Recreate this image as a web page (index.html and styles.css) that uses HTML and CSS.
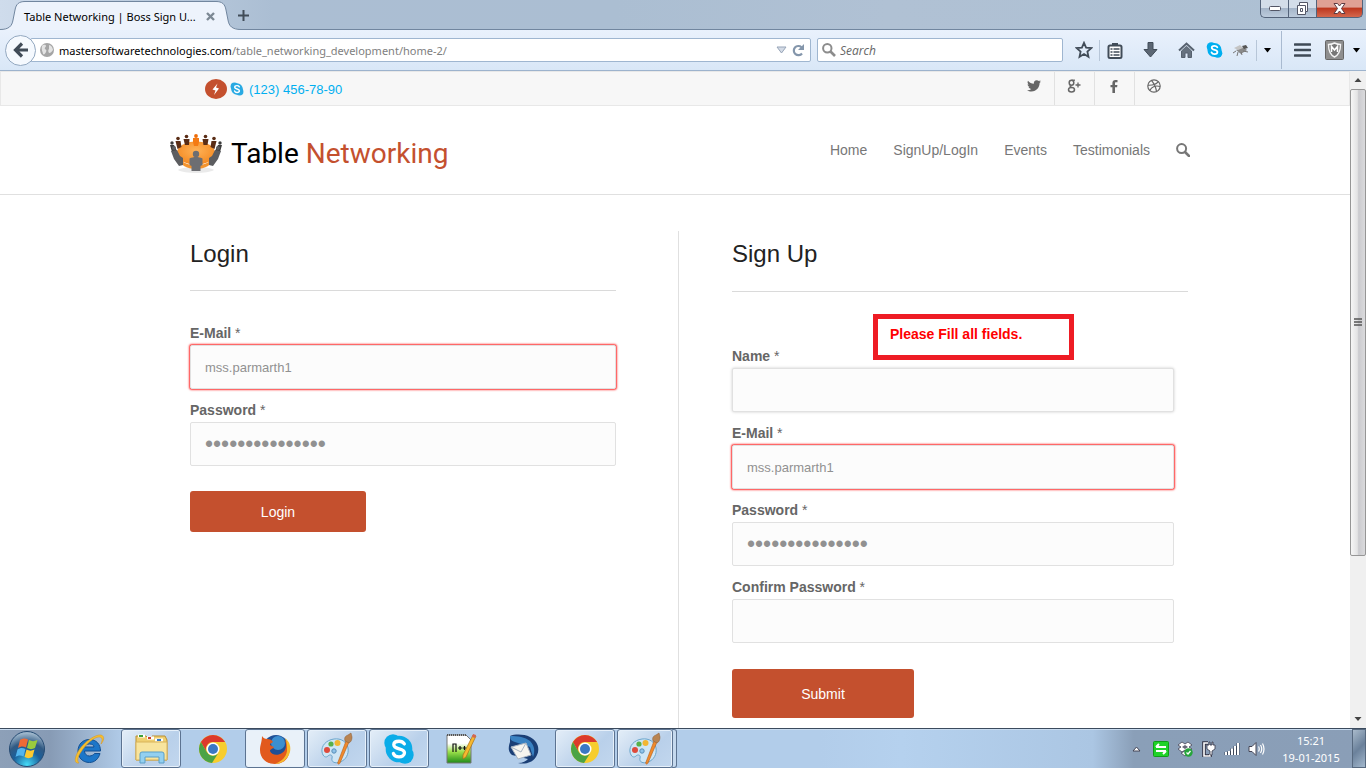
FILE: index.html
```html
<!DOCTYPE html>
<html lang="en">
<head>
<meta charset="utf-8">
<title>Table Networking | Boss Sign Up</title>
<link rel="stylesheet" href="styles.css">
</head>
<body>
<svg class="defs" aria-hidden="true">
  <defs>
    <symbol id="chrome" viewBox="0 0 30 30">
      <circle cx="15" cy="15" r="14" fill="#f7cd2e"/>
      <path d="M2.9 8A14 14 0 0 1 27.1 8H15A7 7 0 0 0 8.9 18.500Z" fill="#dc3a2c"/>
      <path d="M2.900 8A14 14 0 0 0 14 29L20 19.500A7 7 0 0 1 9 18.500Z" fill="#4ba345"/>
      <circle cx="15" cy="15" r="6.500" fill="#fff"/>
      <circle cx="15" cy="15" r="5" fill="#3b78c4"/>
    </symbol>
    <symbol id="paint" viewBox="0 0 34 34">
      <path d="M14 7C6 8 1 14 2 20c1 5 4 6 6 4s5-1 4 2c-1 4 3 6 8 4 6-2 9-8 8-14-1-6-7-10-14-9z" fill="#cfe6f5" stroke="#6ba6cc"/>
      <circle cx="7" cy="18" r="3" fill="#de4a3c"/><circle cx="11" cy="12" r="2.600" fill="#58b04a"/><circle cx="17.500" cy="11" r="3" fill="#f2b632"/><circle cx="14" cy="19" r="2.200" fill="#8ec3ea" stroke="#5a8fb8"/>
      <path d="M26 9l3 1-9 21c-1 2-3 1-2-1z" fill="#f08a2c" stroke="#b65e17" stroke-width=".6"/>
      <path d="M25 9c-1-3 0-5 3-6l3-2 1 4c0 3-1 5-3 6z" fill="#b98452" stroke="#8a5a30" stroke-width=".5"/>
    </symbol>
    <symbol id="skype" viewBox="0 0 24 24">
      <circle cx="7.500" cy="7.500" r="6.500"/><circle cx="16.500" cy="16.500" r="6.500"/><circle cx="12" cy="12" r="10"/>
      <path d="M16 8.200C15 6.700 13.500 6.200 12 6.200c-2.400 0-3.900 1.100-3.900 2.700 0 4 8 2 8 6 0 2-1.900 3-4.100 3-2 0-3.500-.8-4.200-2.500" fill="none" stroke="#fff" stroke-width="2.500" stroke-linecap="round"/>
    </symbol>
  </defs>
</svg>

<header class="chrome">
  <div class="tabstrip">
    <div class="tab">
      <svg class="tab-shape" viewBox="0 0 245 30" aria-hidden="true"><path d="M0 30V29.500C9 29.500 12 26 13 20L15 10C16 4 19 1.500 25 1.500H216C222 1.500 225 4 226 10L228 20C229 26 232 29.500 241 29.500H245V30Z" fill="#edf3fc"/><path d="M0 29.500C9 29.500 12 26 13 20L15 10C16 4 19 1.500 25 1.500H216C222 1.500 225 4 226 10L228 20C229 26 232 29.500 241 29.500H245" fill="none" stroke="#71869f"/></svg>
      <span class="tab-title">Table Networking | Boss Sign U...</span>
      <button class="plain tab-close" aria-label="Close tab"><svg width="9" height="9" viewBox="0 0 9 9"><path d="M1 1l7 7M8 1L1 8" stroke="#7c8894" stroke-width="2.400"/></svg></button>
    </div>
    <button class="plain new-tab" aria-label="New tab"><svg width="11" height="11" viewBox="0 0 11 11"><path d="M5.500 0v11M0 5.500h11" stroke="#414c58" stroke-width="2"/></svg></button>
    <div class="win-buttons">
      <button aria-label="Minimize"><svg width="12" height="6" viewBox="0 0 12 6"><rect x=".5" y=".5" width="11" height="4" rx="1" fill="#fff" stroke="#535666"/></svg></button>
      <button aria-label="Restore"><svg width="13" height="13" viewBox="0 0 13 13"><path d="M3.500 .5h8v9h-2v3h-8v-9h2z" fill="#fff" stroke="#535666"/><path d="M3.500 3.500h6v6M4.500 6.500h2v3h-2z" fill="none" stroke="#535666"/></svg></button>
      <button class="win-close" aria-label="Close"><svg width="13" height="11" viewBox="0 0 13 11"><path d="M1 .5h3.500l2 2.500 2-2.500H12L8.500 5.500 12 10.500H8.500L6.500 8l-2 2.500H1l3.500-5z" fill="#fff" stroke="#5d3a41"/></svg></button>
    </div>
  </div>

  <div class="toolbar">
    <button class="back" aria-label="Back"><svg width="16" height="16" viewBox="0 0 16 16"><path d="M9 1.500L2.500 8 9 14.500M3 8h12" fill="none" stroke="#414c58" stroke-width="3.200"/></svg></button>
    <div class="urlbar">
      <svg width="14" height="14" viewBox="0 0 14 14" aria-hidden="true"><circle cx="7" cy="7" r="7" fill="#a5a5a5"/><path d="M2 3c2-2 4-1 4 0s-2 2-1 3 2 1 1 3-2 3-3 2C3 9 1 7 2 3zM9 2c2 0 4 3 4 5-1 1-2 3-4 3-1-2-1-3 0-4z" fill="#e3e3e3"/></svg>
      <div class="url" role="textbox" aria-label="Address"><b>mastersoftwaretechnologies.com</b>/table_networking_development/home-2/</div>
      <svg width="11" height="8" viewBox="0 0 11 8" aria-hidden="true"><path d="M1 1h9L5.500 7z" fill="#d4dbe6" stroke="#97a5b8"/></svg>
      <button class="plain" aria-label="Reload"><svg width="13" height="13" viewBox="0 0 13 13"><path d="M10 9.500A4.600 4.600 0 1 1 9.500 3.200" fill="none" stroke="#8496ab" stroke-width="2.200"/><path d="M12 0v6H6z" fill="#8496ab"/></svg></button>
    </div>
    <div class="searchbar">
      <svg width="14" height="14" viewBox="0 0 14 14" aria-hidden="true"><circle cx="5.300" cy="5.300" r="4.200" fill="none" stroke="#8c8c8c" stroke-width="2"/><path d="M8.500 8.500l4.500 4.500" stroke="#8c8c8c" stroke-width="2.600"/></svg>
      <input type="text" placeholder="Search" aria-label="Search the web">
    </div>
    <div class="tools">
      <button class="plain w30" aria-label="Bookmark"><svg width="18" height="18" viewBox="0 0 18 18"><path d="M9 1.800l2.100 4.800 5.200.5-3.900 3.500 1.100 5.200L9 13.100l-4.500 2.700 1.100-5.200L1.700 7.100l5.200-.5z" fill="none" stroke="#414c58" stroke-width="1.800"/></svg></button>
      <i class="sep"></i>
      <button class="plain w30" aria-label="Bookmarks list"><svg width="16" height="17" viewBox="0 0 16 17"><path d="M5 3.500V1h6v2.500" fill="#414c58"/><rect x="1.500" y="3.500" width="13" height="12.500" rx="1.500" fill="#fff" stroke="#414c58" stroke-width="2"/><path d="M3.500 7h2m1 0h6M3.500 10h2m1 0h6M3.500 13h2m1 0h6" stroke="#414c58" stroke-width="1.500"/></svg></button>
      <button class="plain w40" aria-label="Downloads"><svg width="15" height="16" viewBox="0 0 15 16"><path d="M5 .5h5v7h4L7.500 15 1 7.500h4z" fill="#5b6673" stroke="#414c58"/></svg></button>
      <button class="plain w32" aria-label="Home"><svg width="17" height="16" viewBox="0 0 17 16"><path d="M1 8.500L8.500 1.500 16 8.500" fill="none" stroke="#56616e" stroke-width="2"/><path d="M3.500 9l5-4.700 5 4.700v6.500H10v-4.500H7v4.500H3.500z" fill="#66717e" stroke="#56616e"/></svg></button>
      <button class="plain w24" aria-label="Skype"><svg width="17" height="18" viewBox="0 0 24 24" fill="#00aff0"><use href="#skype"/></svg></button>
      <button class="plain w30" aria-label="Firebug"><svg width="17" height="15" viewBox="0 0 17 15"><path d="M3 7l8-3 3 3-6 4z" fill="#8a8a8a"/><path d="M10 8l5 1M5 9l-1 4M8 9l1 3M3 8L0 10" stroke="#777" fill="none"/><path d="M1 5l6-3 3 3-5 2z" fill="#c4c4c4"/><path d="M9 3l4-1 2 3-4 1z" fill="#555"/></svg></button>
      <i class="sep"></i>
      <button class="plain w20" aria-label="More"><svg width="7" height="5" viewBox="0 0 7 5"><path d="M0 0h7L3.500 4.500z"/></svg></button>
      <i class="sep tall"></i>
      <button class="plain w40" aria-label="Menu"><svg width="17" height="14" viewBox="0 0 17 14"><path d="M1 1.500h15M1 7h15M1 12.500h15" stroke="#3f4a56" stroke-width="2.600" stroke-linecap="round"/></svg></button>
      <button class="plain w24" aria-label="Site advisor"><svg width="19" height="20" viewBox="0 0 19 20"><rect x=".5" y=".5" width="18" height="19" rx="1" fill="#8e8e8e" stroke="#666"/><path d="M3.500 4.500c2 0 4-.5 6-1.500 2 1 4 1.500 6 1.500 0 6-1 10-6 12.500-5-2.500-6-6.500-6-12.500z" fill="#777" stroke="#f4f4f4" stroke-width="1.400"/><path d="M6.500 12V6.500l3 3.500 3-3.500V12" fill="none" stroke="#fff" stroke-width="1.600"/></svg></button>
      <button class="plain w20" aria-label="Site advisor options"><svg width="7" height="5" viewBox="0 0 7 5"><path d="M0 0h7L3.500 4.500z"/></svg></button>
    </div>
  </div>
</header>

<div class="viewport">
  <div class="page">
    <div class="topbar">
      <div class="container topbar-row">
        <p class="phone">
          <svg width="22" height="20" viewBox="0 0 22 20" aria-hidden="true"><ellipse cx="11" cy="10" rx="11" ry="10" fill="#c4502e"/><path d="M12.500 4.500L7.500 10.500l3 1L9 16l5-6.500-3-1z" fill="#fff"/></svg>
          <svg class="phone-skype" width="14" height="14" viewBox="0 0 24 24" fill="#29aae3" aria-hidden="true"><use href="#skype"/></svg>
          <a href="#">(123) 456-78-90</a>
        </p>
        <ul class="social">
          <li><a href="#" aria-label="Twitter"><svg width="14" height="12" viewBox="0 0 14 12"><path d="M14 1.500c-.5.300-1 .5-1.600.500.600-.400 1-.900 1.200-1.500-.6.300-1.200.500-1.800.600A2.900 2.900 0 0 0 6.900 3.700C4.500 3.600 2.400 2.500 1 .700.200 2 .6 3.700 1.900 4.500c-.5 0-.9-.1-1.300-.300 0 1.400 1 2.500 2.300 2.800-.4.100-.9.100-1.300 0 .4 1.100 1.400 1.900 2.700 2C3.100 10 1.600 10.400 0 10.200 1.300 11 2.800 11.500 4.400 11.500c5.400 0 8.300-4.500 8.200-8.600.6-.4 1-.900 1.400-1.400z" fill="#666"/></svg></a></li>
          <li><a href="#" aria-label="Google Plus"><svg width="14" height="14" viewBox="0 0 14 14"><path d="M8 1.200H4.500" stroke="#666" stroke-width="1.300"/><ellipse cx="4.500" cy="3.800" rx="2.300" ry="2.500" fill="none" stroke="#666" stroke-width="1.500"/><path d="M3.500 6.300C2.500 7.500 3.500 8 5 8.500" fill="none" stroke="#666" stroke-width="1.400"/><ellipse cx="4.500" cy="10.800" rx="3" ry="2.200" fill="none" stroke="#666" stroke-width="1.500"/><path d="M11 3.500v5M8.500 6h5" stroke="#666" stroke-width="1.300"/></svg></a></li>
          <li><a href="#" aria-label="Facebook"><svg width="8" height="13" viewBox="0 0 8 13"><path d="M7.500 0v2.200H6c-.8 0-1 .4-1 1V5h2.400l-.3 2.200H5V13H2.400V7.200H.5V5h1.900V3C2.400 1 3.600 0 5.400 0z" fill="#666"/></svg></a></li>
          <li><a href="#" aria-label="Dribbble"><svg width="14" height="14" viewBox="0 0 14 14" fill="none" stroke="#666" stroke-width="1.200"><circle cx="7" cy="7" r="6.200"/><path d="M4.500 1.300C7.500 5 9 8.500 9.500 12.600M1 6.200c4 .2 8-.7 10.300-3.600M2.800 11.400C4.500 7.500 9 6.200 13 7.500"/></svg></a></li>
        </ul>
      </div>
    </div>

    <div class="masthead">
      <div class="container masthead-row">
        <a class="logo" href="#">
          <svg width="52" height="40" viewBox="0 0 52 40" aria-hidden="true">
            <defs><radialGradient id="wood" cx=".5" cy=".4" r=".6"><stop offset="0" stop-color="#ffb257"/><stop offset="1" stop-color="#f48a22"/></radialGradient></defs>
            <path d="M8 36c4-4 32-4 36 0-6 4-30 4-36 0z" fill="#eaeaea"/>
            <ellipse cx="26" cy="19" rx="19" ry="11.500" fill="url(#wood)"/>
            <path d="M8 22c3 6 10 9.500 18 9.500s15-3.500 18-9.500c-1 9-9 13-18 13S9 31 8 22z" fill="#f3942f"/>
            <g fill="#5a2d16"><circle cx="8" cy="4.500" r="1.800"/><path d="M5.500 7h5l1 6-4 2z"/><circle cx="16.500" cy="2.500" r="1.800"/><path d="M13.500 5h6l-.5 6h-4z"/><circle cx="35.500" cy="2.500" r="1.800"/><path d="M32.500 5h6l-1 6h-4z"/><circle cx="44" cy="4.500" r="1.800"/><path d="M41.500 7h5l-2 8-4-2z"/></g>
            <circle cx="26" cy="2" r="1.900" fill="#ee6c08"/><path d="M23 4h6v4l-1 4h-4l-1-4z" fill="#f47a13"/>
            <g fill="#3b3b3b"><circle cx="2" cy="9" r="1.700"/><path d="M0 11h4l3 6-5 1z"/><circle cx="50" cy="9" r="1.700"/><path d="M52 11h-4l-3 6 5 1z"/></g>
            <g fill="#5c5d60"><circle cx="4" cy="14" r="2"/><path d="M1 17l6-1 3 6 3 2v7l-4 1-5-7z"/><circle cx="48" cy="14" r="2"/><path d="M51 17l-6-1-3 6-3 2v7l4 1 5-7z"/></g>
            <g fill="#6d6e72"><circle cx="26" cy="20" r="3.200"/><path d="M19.500 24.500c4-2 9-2 13 0v6.500l-2 1v5h-9v-5l-2-1z"/></g>
          </svg>
          <span class="logo-text">Table <em>Networking</em></span>
        </a>
        <nav class="nav">
          <a href="#">Home</a><a href="#">SignUp/LogIn</a><a href="#">Events</a><a href="#">Testimonials</a>
          <button class="plain" aria-label="Search"><svg width="14" height="14" viewBox="0 0 14 14"><circle cx="5.600" cy="5.600" r="4.500" fill="none" stroke="#777" stroke-width="2"/><path d="M9 9l4 4" stroke="#777" stroke-width="2.500" stroke-linecap="round"/></svg></button>
        </nav>
      </div>
    </div>

    <main class="container forms">
      <form class="login">
        <h2>Login</h2>
        <div class="fields">
          <div class="field"><label for="l-email"><b>E-Mail</b> *</label><input class="invalid" id="l-email" type="text" value="mss.parmarth1"></div>
          <div class="field"><label for="l-pass"><b>Password</b> *</label><input id="l-pass" type="password" value="aaaaaaaaaaaaaaa"></div>
        </div>
        <button class="submit" type="button">Login</button>
      </form>
      <form class="signup">
        <h2>Sign Up</h2>
        <p class="error">Please Fill all fields.</p>
        <div class="fields">
          <div class="field"><label for="s-name"><b>Name</b> *</label><input class="focused" id="s-name" type="text"></div>
          <div class="field"><label for="s-email"><b>E-Mail</b> *</label><input class="invalid" id="s-email" type="text" value="mss.parmarth1"></div>
          <div class="field"><label for="s-pass"><b>Password</b> *</label><input id="s-pass" type="password" value="aaaaaaaaaaaaaaa"></div>
          <div class="field"><label for="s-conf"><b>Confirm Password</b> *</label><input id="s-conf" type="password"></div>
        </div>
        <button class="submit big" type="button">Submit</button>
      </form>
    </main>
  </div>
  <div class="scrollbar" aria-hidden="true">
    <svg class="arrow" viewBox="0 0 16 18"><path d="M4.500 11L8 7l3.500 4z" fill="#444"/></svg>
    <div class="thumb"><svg width="8" height="9" viewBox="0 0 8 9"><path d="M0 1h8M0 4h8M0 7h8" stroke="#555" stroke-width="1.600"/></svg></div>
    <div class="track"></div>
    <svg class="arrow" viewBox="0 0 16 18"><path d="M4.500 7L8 11l3.500-4z" fill="#444"/></svg>
  </div>
</div>

<footer class="taskbar">
  <button class="plain start" aria-label="Start"><svg width="38" height="38" viewBox="0 0 38 38"><defs><radialGradient id="orb" cx=".5" cy=".95" r=".9"><stop offset="0" stop-color="#45dcf8"/><stop offset=".45" stop-color="#1b5f9b"/><stop offset=".7" stop-color="#315a83"/><stop offset="1" stop-color="#9db6cb"/></radialGradient></defs><circle cx="19" cy="19" r="17.500" fill="url(#orb)" stroke="#254b73"/><path d="M12 10c3-2 5-2 8-.5l-2 8c-3-1.500-5-1.500-8 .5z" fill="#ee6a36"/><path d="M21 10c3 1.500 5 1.500 8.500 0l-2.500 8c-3 1.500-5 1.500-8 0z" fill="#9acb3d"/><path d="M9.500 19.500c3-2 5-2 8-.5l-2 7.500c-3-1.500-5-1.500-8 .5z" fill="#52b5ee"/><path d="M18.500 19.500c3 1.500 5 1.500 8 0L24.500 27c-3 1.500-5 1.500-8 0z" fill="#fdc930"/></svg></button>
  <div class="apps">
    <button aria-label="Internet Explorer"><svg width="34" height="32" viewBox="0 0 34 32"><path d="M28.500 18H12.500c0 3 2 5 5 5 2 0 4-1 5-2.500h5.500C26.500 26 22.500 29.500 17.500 29.500 10.500 29.500 6 24.500 6 18S10.500 6.500 17.500 6.500c7 0 11 5 11 11.500zm-6.500-4C22 12 20 11 17.500 11s-4.500 1-5 3z" fill="#1d76c8" stroke="#124f92"/><path d="M7 30c-5 1-5-5 0-13C13 8 24 1 29 2c4 1 3 6 0 9 2-5 1-7-2-7C22 4 14 11 9 19c-4 6-4 9-2 11z" fill="#f6bf2f" stroke="#d8941b" stroke-width=".5"/></svg></button>
    <button class="open" aria-label="Explorer"><svg width="34" height="32" viewBox="0 0 34 32"><path d="M2 6V3h10l2 2h4V3h13l2 4v20H2z" fill="#efcf70" stroke="#b98f34"/><path d="M4 3h7M13 5h7M21 7h8" stroke="#fff" stroke-width="3"/><path d="M5 3h4" stroke="#3da13a" stroke-width="2"/><path d="M14 5h3" stroke="#cd3f2d" stroke-width="2"/><path d="M23 7h4" stroke="#3279c7" stroke-width="2"/><path d="M2 9h31v18H2z" fill="#f8e49d" stroke="#d8b35a"/><path d="M6 30V21q0-2 2-2h20q2 0 2 2v9h-5v-6H11v6z" fill="#93d0f0" stroke="#5a9fc8"/></svg></button>
    <button aria-label="Chrome"><svg width="30" height="30"><use href="#chrome"/></svg></button>
    <button class="open active" aria-label="Firefox"><svg width="32" height="32" viewBox="0 0 32 32"><circle cx="17" cy="15" r="13" fill="#1f4f96"/><circle cx="19" cy="10" r="7" fill="#3c8fd0"/><path d="M3 3c1 2 3 3 5 3 3 0 5 1 6 3l-3 2c0 2 3 2 4 3-1 2-4 2-4 4 1 4 8 5 12 2 4-2 5-8 3-13 4 3 5 8 4 13-1 7-7 11-14 11C7 31 1 25 1 17 1 12 3 9 3 3z" fill="#e2591c"/><path d="M26 5c5 4 6 9 5 14-2 7-8 12-15 12 7-3 11-7 12-13 0-5 0-9-2-13z" fill="#f6bb2f"/></svg></button>
    <button class="open" aria-label="Paint"><svg width="34" height="34"><use href="#paint"/></svg></button>
    <button class="open" aria-label="Skype"><svg width="32" height="32" fill="#0bace8"><use href="#skype"/></svg></button>
    <button aria-label="Notepad++"><svg width="32" height="34" viewBox="0 0 32 34"><defs><linearGradient id="np" x2="0" y2="1"><stop offset=".3" stop-color="#fff"/><stop offset=".6" stop-color="#9be04a"/><stop offset="1" stop-color="#1f8a18"/></linearGradient></defs><path d="M2 3h19l5 5v23H2z" fill="url(#np)" stroke="#777"/><path d="M2 3h19" stroke="#555" stroke-width="2" stroke-dasharray="1 1"/><path d="M8 20v-8h3v8M13 16h4M15 14v4M17.500 16h4M19.500 14v4" fill="none" stroke="#111" stroke-width="1.200"/><path d="M28 3l3 1-10 21-3 2v-4z" fill="#f6b830" stroke="#a86f16" stroke-width=".7"/><path d="M27 5l1-3 3 1-1 3z" fill="#d46553"/></svg></button>
    <button aria-label="Thunderbird"><svg width="34" height="32" viewBox="0 0 34 32"><path d="M4 3c5-2 14-2 20 1 8 4 10 12 7 18-3 7-11 10-19 8 5 0 8-2 10-4L6 22C1 18 3 12 4 9z" fill="#1b3f76"/><path d="M4 3c8 0 15 1 20 5 5 5 5 11 3 16l-3-10-15-5C5 8 4 6 4 3z" fill="#3a82c2"/><path d="M5 14l15-4 5 12-13 4z" fill="#f7f5ef" stroke="#a8b4c2"/><path d="M5 14l10 5 5-9" fill="none" stroke="#a8b4c2"/></svg></button>
    <button class="open" aria-label="Chrome window"><svg width="30" height="30"><use href="#chrome"/></svg></button>
    <button class="open stacked" aria-label="Paint windows"><svg width="34" height="34"><use href="#paint"/></svg></button>
  </div>
  <div class="tray">
    <svg width="9" height="6" viewBox="0 0 9 6"><path d="M1 5l3.500-4L8 5z" fill="#fff" stroke="#445"/></svg>
    <svg width="16" height="16" viewBox="0 0 16 16"><rect x=".5" y=".5" width="15" height="15" rx="1" fill="#1fd228" stroke="#109c18"/><path d="M3 6h10M3 10h10M6 3L3 6M10 13l3-3" stroke="#fff" stroke-width="2"/></svg>
    <svg width="16" height="16" viewBox="0 0 16 16"><path d="M5 1l3 2 3-2 4 3-3 2 3 2-4 3-3-2-3 2-4-3 3-2-3-2zM4 12l4-2 4 2-4 3z" fill="#fff" stroke="#445" stroke-width=".8"/><path d="M5 6l3-2 3 2-3 2z" fill="#667"/><circle cx="11.500" cy="11.500" r="4.200" fill="#26a53a"/><path d="M9.500 11.500l1.500 1.500 2.500-3" fill="none" stroke="#fff" stroke-width="1.300"/></svg>
    <svg width="15" height="16" viewBox="0 0 15 16"><path d="M7 2H3v13h6v-2" fill="none" stroke="#334" stroke-width="3.600"/><path d="M7 2H3v13h6v-2" fill="none" stroke="#fff" stroke-width="1.600"/><path d="M8 1v3h-2v4l3 2v4h2v-4l3-2V4h-2V1h-1v3H9V1z" fill="#fff" stroke="#334" stroke-width=".8"/></svg>
    <svg width="16" height="14" viewBox="0 0 16 14"><path d="M2 10v3M5 9v4M8 6.500V13M11 4v9M14 1v12" stroke="#3c4658" stroke-width="3"/><path d="M2 10v3M5 9v4M8 6.500V13M11 4v9M14 1v12" stroke="#fff" stroke-width="2"/></svg>
    <svg width="17" height="14" viewBox="0 0 17 14"><path d="M1 4.500h3l4-4v13l-4-4H1z" fill="#fff" stroke="#445"/><path d="M10.500 4.500q1.500 2.500 0 5M12.500 3q2.500 4 0 8M14.500 1.500q3 5.500 0 11" fill="none" stroke="#fff" stroke-width="1.200"/></svg>
  </div>
  <div class="clock"><span>15:21</span><span>19-01-2015</span></div>
  <button class="show-desktop" aria-label="Show desktop"></button>
</footer>
<div class="callout"></div>
</body>
</html>
```
FILE: styles.css
```css
* { box-sizing: border-box; }
body {
  margin: 0;
  height: 100vh;
  display: flex;
  flex-direction: column;
  overflow: hidden;
  position: relative;
  background: #fff;
  font-family: "Liberation Sans", Arial, sans-serif;
}
.defs { position: absolute; width: 0; height: 0; }
svg { display: block; flex: none; }
button { font: inherit; cursor: pointer; }
.plain {
  display: flex;
  align-items: center;
  justify-content: center;
  flex: none;
  padding: 0;
  border: 0;
  background: none;
}

/* Browser window */
.chrome { flex: none; font-family: "Noto Sans", "Open Sans", sans-serif; font-size: 11px; }
.tabstrip {
  display: flex;
  height: 30px;
  background: linear-gradient(90deg, #cfdcec 0, #abbed3 20%, #abbed2 45%, #b0c1d4 65%, #adc0d3 100%);
  box-shadow: inset 0 -1px #71869f;
}
.tab {
  position: relative;
  display: flex;
  align-items: center;
  justify-content: space-between;
  width: 245px;
  padding: 2px 30px 0 24px;
}
.tab-shape { position: absolute; left: 0; top: 0; width: 245px; height: 30px; }
.tab-title, .tab-close { position: relative; white-space: nowrap; }
.new-tab { width: 20px; margin-left: -12px; }
.win-buttons { display: flex; height: 18px; margin: 0 3px 0 auto; }
.win-buttons button {
  display: flex;
  align-items: center;
  justify-content: center;
  width: 28px;
  padding: 0;
  border: 1px solid #54637a;
  border-top: 0;
  border-right-width: 0;
  background: linear-gradient(#d3dde9 45%, #a5b5c9 50%, #bccbdc);
}
.win-buttons button:first-child { border-bottom-left-radius: 5px; }
.win-buttons .win-close {
  width: 47px;
  border-right-width: 1px;
  border-bottom-right-radius: 5px;
  background: linear-gradient(#dfa094 40%, #bd3820 50%, #d4674d);
}
.toolbar {
  display: flex;
  align-items: center;
  height: 41px;
  padding-left: 5px;
  border-bottom: 1px solid #9db3cd;
  background: linear-gradient(#e9f1fc, #d9e7f7);
}
.back {
  position: relative;
  z-index: 1;
  display: flex;
  align-items: center;
  justify-content: center;
  flex: none;
  width: 31px;
  height: 31px;
  padding: 0;
  border: 1px solid #93a8c0;
  border-radius: 50%;
  background: #f5f9fe;
}
.urlbar, .searchbar {
  display: flex;
  align-items: center;
  height: 24px;
  border: 1px solid #9fb6d0;
  border-radius: 2px;
  background: #fff;
}
.urlbar { flex: 1; gap: 5px; margin-left: -6px; padding: 0 5px 0 9px; }
.url { flex: 1; color: #808080; white-space: nowrap; }
.url b { color: #000; font-weight: 400; }
.searchbar { width: 246px; margin: 0 6px; padding: 0 4px; gap: 4px; }
.searchbar input {
  flex: 1;
  min-width: 0;
  padding: 0;
  border: 0;
  outline: 0;
  background: none;
  font: italic 12px "Open Sans", sans-serif;
}
.searchbar input::placeholder { color: #666; }
.tools { display: flex; align-items: center; }
.sep { width: 1px; height: 21px; background: #b7c6d8; }
.sep.tall { height: 38px; margin-left: 4px; background: #a9bad0; }
.w20 { width: 20px; }
.w24 { width: 24px; }
.w30 { width: 30px; }
.w32 { width: 32px; }
.w40 { width: 40px; }

/* Web page */
.viewport { flex: 1; display: flex; min-height: 0; }
.page { flex: 1; display: flex; flex-direction: column; overflow: hidden; }
.container { width: 100%; max-width: 1030px; margin: 0 auto; padding: 0 0 0 10px; }
.topbar { flex: none; height: 35px; border: 1px solid #e8e8e8; background: #f7f7f7; }
.topbar-row { display: flex; justify-content: space-between; padding: 0 16px 0 45px; }
.phone { display: flex; align-items: center; height: 34px; margin: 0; font-size: 13px; }
.phone a { color: #00aff0; text-decoration: none; }
.phone-skype { margin: 0 5px 0 3px; }
.social { display: flex; margin: 0; padding: 0; list-style: none; }
.social li { width: 40px; height: 33px; border-left: 1px solid #e1e1e1; }
.social li:first-child { border-left-color: transparent; }
.social a { display: flex; align-items: center; justify-content: center; height: 28px; padding-right: 2px; }
.masthead { flex: none; border-bottom: 1px solid #e0e0e0; }
.masthead-row { display: flex; align-items: center; justify-content: space-between; height: 88px; }
.logo { display: flex; align-items: center; gap: 9px; padding-top: 8px; color: #000; text-decoration: none; }
.logo-text { font: 28px/36px Roboto, sans-serif; }
.logo-text em { color: #c4502e; font-style: normal; }
.nav { display: flex; align-items: center; gap: 26px; font-size: 14px; }
.nav a { color: #777; text-decoration: none; }

.forms { display: flex; flex: 1; padding: 36px 2px 0 30px; }
.login { flex: 1; padding-right: 62px; }
.signup { flex: 1 0 510px; max-width: 510px; padding-left: 53px; border-left: 1px solid #e0e0e0; }
h2 {
  margin: 0;
  height: 60px;
  border-bottom: 1px solid #dadada;
  color: #222;
  font-size: 24px;
  font-weight: 400;
  line-height: 46px;
}
.signup h2 { height: 61px; }
.login .fields { padding-top: 31px; }
.error {
  margin: 0;
  padding: 32px 0 0 158px;
  color: #f00;
  font-size: 14px;
  font-weight: 700;
  line-height: 20px;
}
.signup .fields { padding: 1px 14px 0 0; }
.field { margin-bottom: 10px; }
.field label { display: block; height: 23px; color: #666; font-size: 14px; line-height: 22px; }
.field input {
  display: block;
  width: 100%;
  height: 44px;
  padding: 0 14px;
  border: 1px solid #e1e1e1;
  border-radius: 2px;
  outline: 0;
  background: #fcfcfc;
  color: #919191;
  font: 13px "Liberation Sans", Arial, sans-serif;
}
.field input[type="password"] { font-size: 23px; }
.field .invalid { box-shadow: 0 0 2px 1px #f33; }
.field .focused { box-shadow: 0 0 3px #ccc; }
.submit {
  width: 176px;
  height: 41px;
  margin-top: 15px;
  border: 0;
  border-radius: 3px;
  background: #c4502e;
  color: #fff;
  font-size: 14px;
}
.submit.big { width: 182px; height: 49px; margin-top: 16px; }

.scrollbar { display: flex; flex-direction: column; width: 16px; background: #f0f0f0; }
.arrow { height: 18px; }
.thumb {
  display: flex;
  align-items: center;
  justify-content: center;
  flex: 466;
  border: 1px solid #969696;
  border-radius: 2px;
  background: linear-gradient(90deg, #f6f6f6, #e3e3e4 45%, #cbcbcf 55%, #dadadc);
}
.track { flex: 155; }

/* Taskbar */
.taskbar {
  display: flex;
  align-items: center;
  flex: none;
  height: 40px;
  border-top: 1px solid #3b4a5d;
  background: linear-gradient(90deg, #8da0b8 0, #879bb5 50px, #b2cdea 125px, #b2cdea 60%, #b5d1ee 66%, #abc6e3 80%, #8a9fb8 83%, #8a9eb7 100%);
  box-shadow: inset 0 1px #c9dcf0;
}
.start { width: 59px; padding-right: 5px; }
.apps { display: flex; gap: 2px; height: 39px; }
.apps button {
  display: flex;
  align-items: center;
  justify-content: center;
  width: 60px;
  padding: 0;
  border: 0;
  background: none;
}
.apps .open {
  border: 1px solid #5c7391;
  border-radius: 3px;
  background: linear-gradient(135deg, #e4eef8, #b9d0ea 60%, #c2d7ee);
  box-shadow: inset 0 0 0 1px #e6f0fa;
}
.apps .active { background: #e9f1f9; }
.apps .stacked { width: 56px; box-shadow: inset 0 0 0 1px #e6f0fa, 4px 0 0 -1px #c5d9ee, 4px 0 0 #5c7391; }
.tray { display: flex; align-items: center; gap: 8px; margin-left: auto; padding-right: 16px; }
.tray svg:first-child { margin-right: 4px; }
.clock {
  display: flex;
  flex-direction: column;
  align-items: center;
  width: 60px;
  margin-right: 11px;
  color: #fff;
  font: 11px/17px "Noto Sans", sans-serif;
  white-space: nowrap;
}
.show-desktop {
  align-self: stretch;
  width: 14px;
  padding: 0;
  border: 1px solid #57697f;
  background: linear-gradient(135deg, #a9bacb, #6b819b 50%, #a3b8cd);
}

/* Highlight frame laid over the error message */
.callout {
  position: absolute;
  left: 873px;
  top: 314px;
  width: 201px;
  height: 46px;
  border: 5px solid #ee1c24;
  pointer-events: none;
}
```
